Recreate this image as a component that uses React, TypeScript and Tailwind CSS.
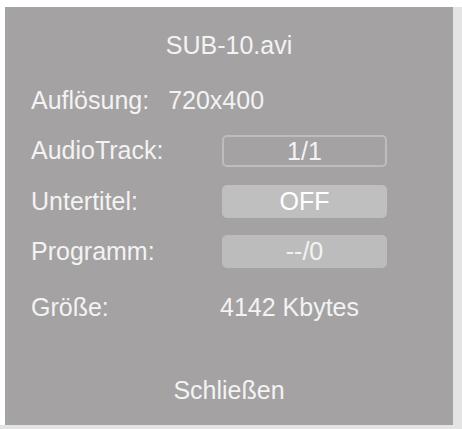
export default function App() {
  const font = { fontFamily: '"Liberation Sans", Arial, sans-serif' }
  return (
    <div className="w-[462px] h-[429px] bg-[#e4e4e4] overflow-hidden" style={font}>
      <div className="w-[462px] h-[7px] bg-white" />
      <div className="flex">
        <div className="w-[5px] h-[418px] bg-white" />
        <div className="w-[448px] h-[418px] bg-[#a4a2a3] text-[#f3f3f3] text-[25px] flex flex-col pt-[23px] pl-[26px]">
          <div className="h-[30px] leading-[30px] text-center pr-[26px]">SUB-10.avi</div>

          <div className="mt-[25px] h-[30px] leading-[30px] flex">
            <span>Auflösung:</span>
            <span className="ml-[19px]">720x400</span>
          </div>

          <div className="mt-[20px] flex items-center h-[32px]">
            <span className="w-[191px]">AudioTrack:</span>
            <div className="w-[165px] h-[32px] rounded-[5px] border-2 border-[#bebdbe] flex items-center justify-center leading-none">
              1/1
            </div>
          </div>

          <div className="mt-[18px] flex items-center h-[33px]">
            <span className="w-[191px]">Untertitel:</span>
            <div className="w-[165px] h-[33px] rounded-[5px] bg-[#c0bfc0] flex items-center justify-center leading-none text-white">
              OFF
            </div>
          </div>

          <div className="mt-[17px] flex items-center h-[33px]">
            <span className="w-[191px]">Programm:</span>
            <div className="w-[165px] h-[33px] rounded-[5px] bg-[#bdbcbd] flex items-center justify-center leading-none">
              --/0
            </div>
          </div>

          <div className="mt-[24px] flex items-center h-[32px]">
            <span className="w-[189px]">Größe:</span>
            <span>4142 Kbytes</span>
          </div>

          <div className="mt-[50px] h-[32px] leading-[32px] text-center pr-[26px]">Schließen</div>
        </div>
      </div>
    </div>
  )
}
